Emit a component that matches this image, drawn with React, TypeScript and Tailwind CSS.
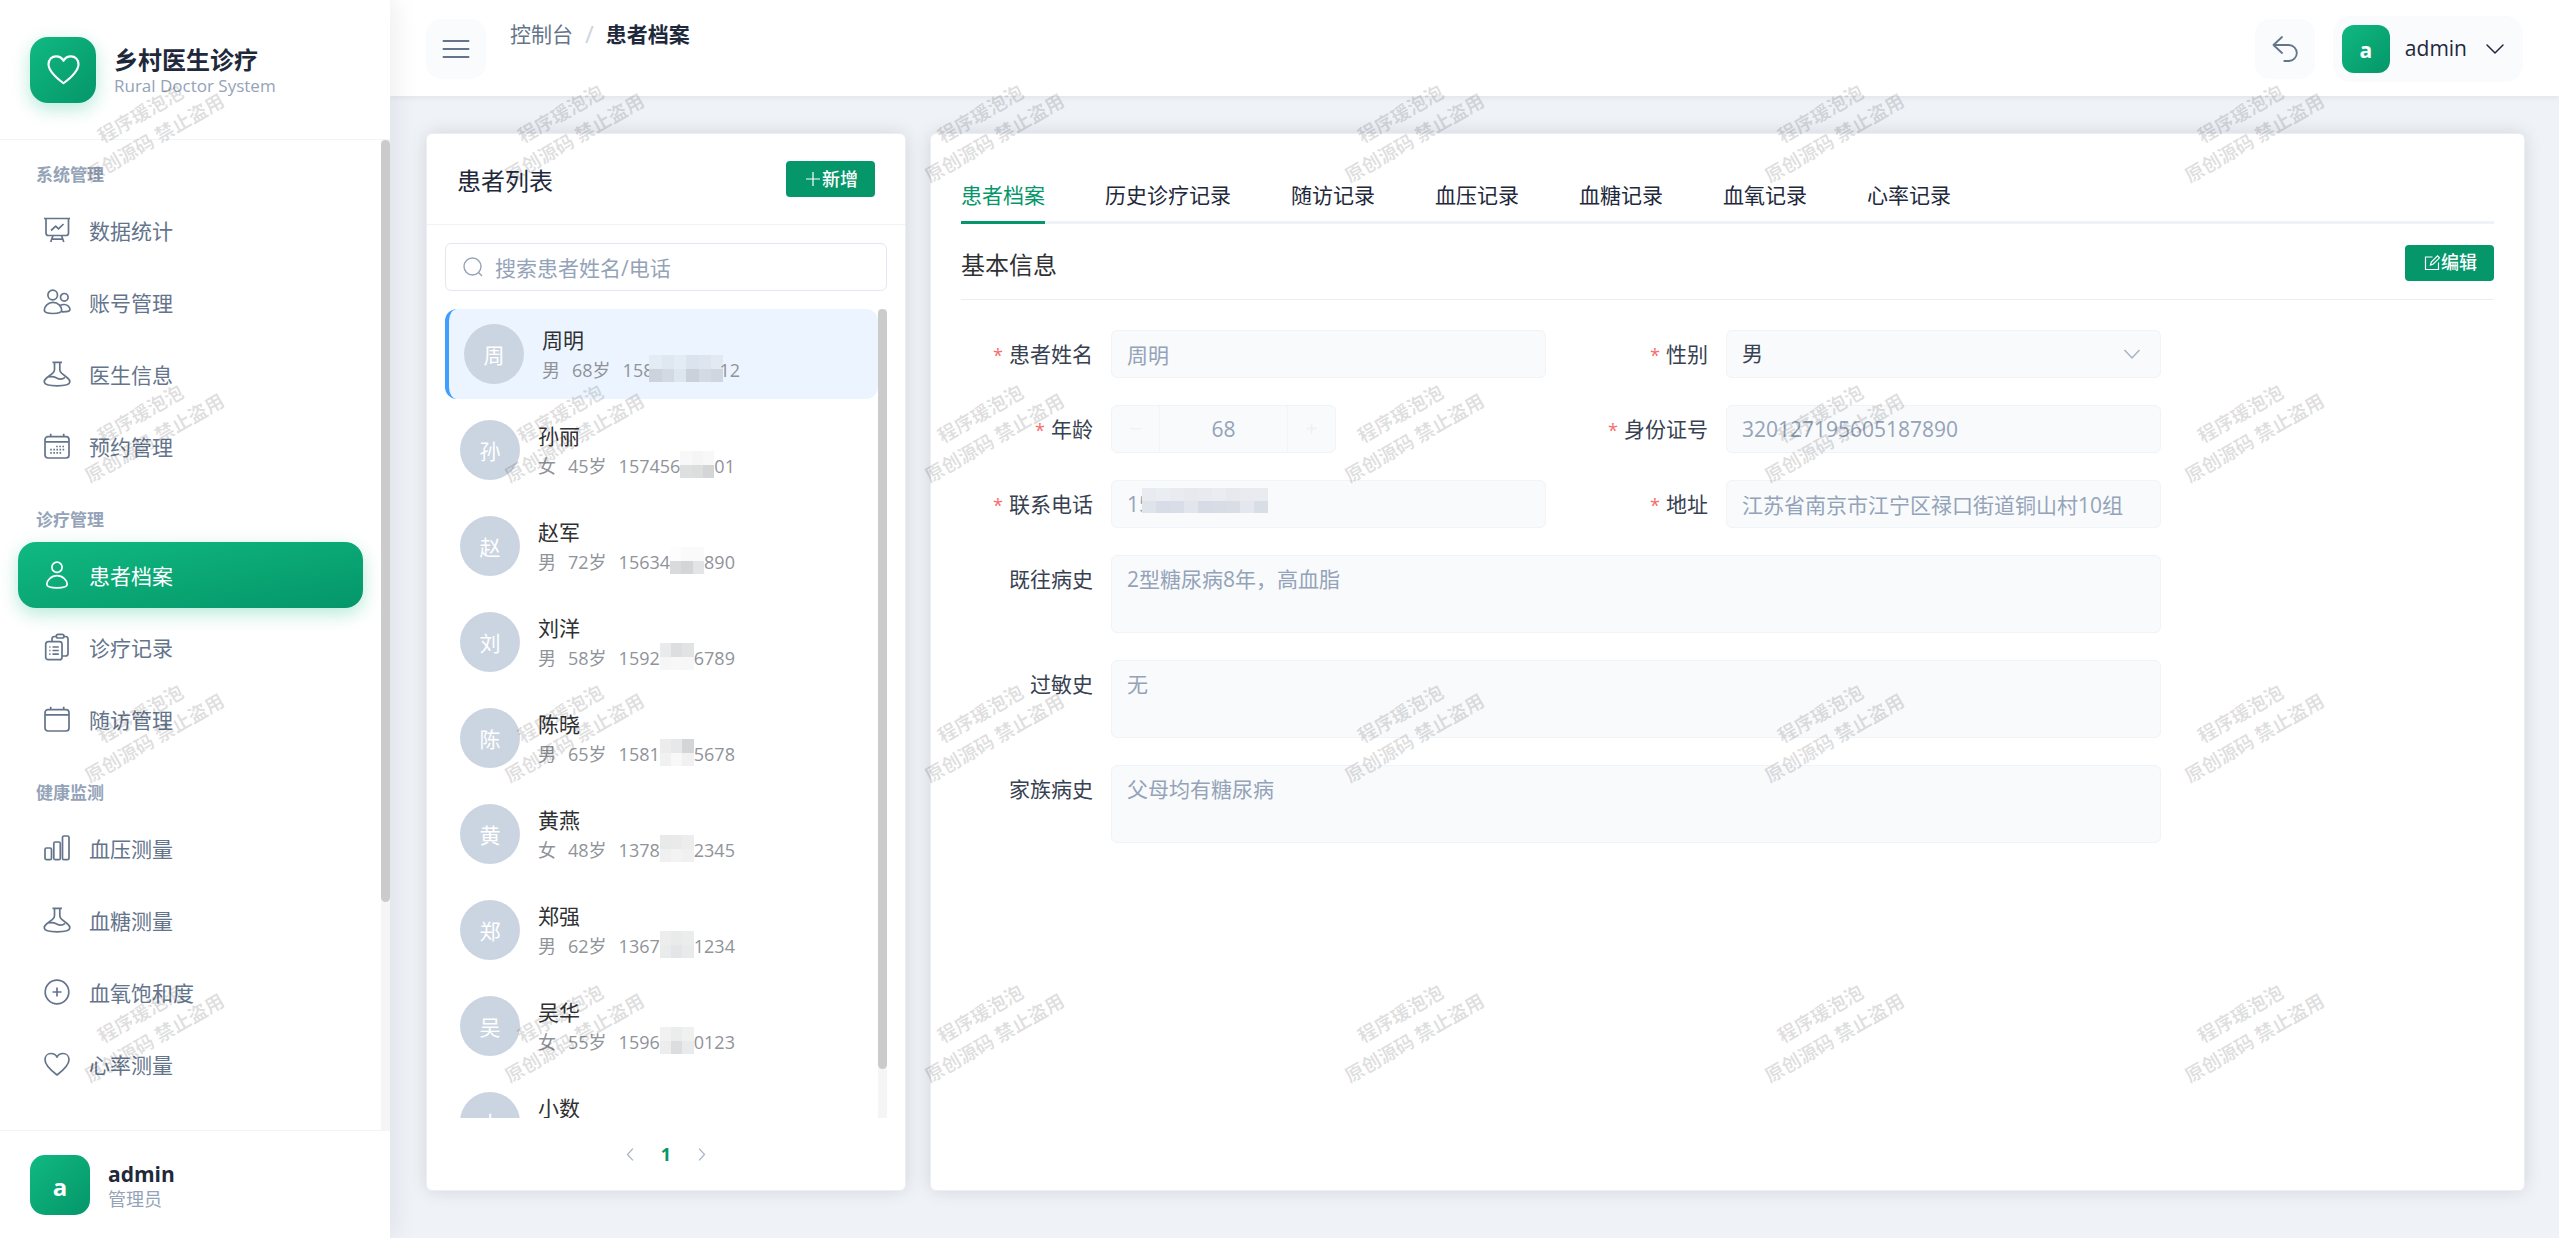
import { useState } from 'react';
import type { ReactNode } from 'react';
import clsx from 'clsx';

type IconName = 'board' | 'users' | 'flask' | 'schedule' | 'user' | 'records' | 'calendar' | 'bars' | 'plusCircle' | 'heart';

const iconShapes: Record<IconName, ReactNode> = {
  board: (
    <>
      <path d="M1 2.5h26M3 2.5V17a2.5 2.5 0 0 0 2.5 2.5H23a2.5 2.5 0 0 0 2.5-2.5V2.5" />
      <path d="M10 19.5 7.7 26M18.5 19.5 20.8 26M9 23.2h10.5M8 14.5l4.7-4.3 2.8 2.6L20.5 8" />
    </>
  ),
  users: (
    <>
      <circle cx="9.7" cy="7" r="4.8" />
      <circle cx="21.3" cy="9.3" r="3.8" />
      <path d="M10 14.3c-5 0-8.7 4.2-8.7 8 0 2.5 3.5 3.2 8.7 3.2s8.7-.7 8.7-3.2c0-3.8-3.7-8-8.7-8z" />
      <path d="M16.8 17.7c1.3-.8 2.8-1.2 4.2-1.2 3.5 0 6 2.8 6 5 0 1.8-2.5 2.4-8.3 2.3" />
    </>
  ),
  flask: (
    <>
      <path d="M9.5 2.3H19M11.5 2.3v7.5c0 1.5-.8 2.6-2 3.6l-6 4.6c-1.6 1.3-2.4 2.6-2.2 4.2.3 2.6 4.2 3.6 12.8 3.6s12.4-1 12.7-3.6c.2-1.6-.6-2.9-2.2-4.2l-5.8-4.6c-1.2-1-2-2.1-2-3.6V2.3" />
      <path d="M5.5 17c3.2-.8 5.5-.4 8.2 1s5.8 1.5 8.3-.7" />
    </>
  ),
  schedule: (
    <>
      <rect x="2" y="4.7" width="24" height="21.3" rx="3" />
      <path d="M2 9.8h24M7.7 1.8v3M20.7 1.8v3" />
      <path d="M13.2 14.5h8.5M7.2 17.7h14.5M7.2 20.9h12" strokeDasharray="1.6 1.5" />
    </>
  ),
  user: (
    <>
      <circle cx="14" cy="6.3" r="5.1" />
      <path d="M14 14.7c-6 0-10.2 5-10.2 8.6 0 2.9 4.2 3.6 10.2 3.6s10.2-.7 10.2-3.6c0-3.6-4.2-8.6-10.2-8.6z" />
    </>
  ),
  records: (
    <>
      <rect x="2.7" y="8.7" width="16.3" height="18" rx="2.5" />
      <path d="M9 8.7V6a2.5 2.5 0 0 1 2.5-2.5h1.8M21 3.5h1.5A2.5 2.5 0 0 1 25 6v14.5a2.5 2.5 0 0 1-2.5 2.5H19" />
      <path d="M13.3 3.2c0-1.2.8-1.9 1.9-1.9H19c1.2 0 2 .8 2 1.9S20.2 5 19 5h-3.8c-1.1 0-1.9-.7-1.9-1.8z" />
      <path d="M6.3 14h1.2M9.5 14h6.3M6.3 17.5h1.2M9.5 17.5h6.3M6.3 21.2h1.2M9.5 21.2h6.3" />
    </>
  ),
  calendar: (
    <>
      <rect x="2" y="4.7" width="24" height="21.3" rx="3" />
      <path d="M2 9.8h24M7.7 1.8v3M20.7 1.8v3" />
    </>
  ),
  bars: (
    <>
      <rect x="2" y="14" width="6.5" height="11.7" rx="1.5" />
      <rect x="10.8" y="8" width="6.5" height="17.7" rx="1.5" />
      <rect x="19.5" y="2" width="6.5" height="23.7" rx="1.5" />
    </>
  ),
  plusCircle: (
    <>
      <circle cx="14" cy="14" r="11.8" />
      <path d="M14 9.5v9M9.5 14h9" />
    </>
  ),
  heart: (
    <path d="M14 25C10 22 2 16 2 9.8 2 6 4.7 3.5 8 3.5c2.7 0 5 1.5 6 3.6 1-2.1 3.3-3.6 6-3.6 3.3 0 6 2.5 6 6.3C26 16 18 22 14 25z" />
  ),
};

function Icon({ name, className }: { name: IconName; className?: string }) {
  return (
    <svg
      viewBox="0 0 28 28"
      fill="none"
      stroke="currentColor"
      strokeWidth={1.7}
      strokeLinejoin="round"
      className={clsx('shrink-0', className)}
      aria-hidden="true"
    >
      {iconShapes[name]}
    </svg>
  );
}

interface MenuGroup {
  title: string;
  items: { label: string; icon: IconName }[];
}

const menu: MenuGroup[] = [
  {
    title: '系统管理',
    items: [
      { label: '数据统计', icon: 'board' },
      { label: '账号管理', icon: 'users' },
      { label: '医生信息', icon: 'flask' },
      { label: '预约管理', icon: 'schedule' },
    ],
  },
  {
    title: '诊疗管理',
    items: [
      { label: '患者档案', icon: 'user' },
      { label: '诊疗记录', icon: 'records' },
      { label: '随访管理', icon: 'calendar' },
    ],
  },
  {
    title: '健康监测',
    items: [
      { label: '血压测量', icon: 'bars' },
      { label: '血糖测量', icon: 'flask' },
      { label: '血氧饱和度', icon: 'plusCircle' },
      { label: '心率测量', icon: 'heart' },
    ],
  },
];

interface Patient {
  name: string;
  sex: string;
  age: number;
  head: string;
  tail: string;
  // hidden digits, two rows of blocks
  mask: string[][];
}

const patients: Patient[] = [
  {
    name: '周明', sex: '男', age: 68, head: '158', tail: '12',
    mask: [
      ['bg-[#e3ebf5]', 'bg-[#dfe7f1]', 'bg-[#e3ebf4]', 'bg-[#dbe3ee]', 'bg-[#dde5ef]', 'bg-[#e2e9f3]'],
      ['bg-[#ccd3dd]', 'bg-[#d2d9e3]', 'bg-[#dde5ef]', 'bg-[#cad1db]', 'bg-[#d3dae4]', 'bg-[#cfd6e0]'],
    ],
  },
  {
    name: '孙丽', sex: '女', age: 45, head: '157456', tail: '01',
    mask: [['bg-[#f8f8f8]', 'bg-[#f5f5f5]', 'bg-[#f8f8f8]'], ['bg-[#dedfe0]', 'bg-[#dcdddd]', 'bg-[#d4d5d6]']],
  },
  {
    name: '赵军', sex: '男', age: 72, head: '15634', tail: '890',
    mask: [['bg-[#fdfdfd]', 'bg-[#fafafa]', 'bg-[#fafafa]'], ['bg-[#d9dadb]', 'bg-[#d4d5d7]', 'bg-[#e3e4e5]']],
  },
  {
    name: '刘洋', sex: '男', age: 58, head: '1592', tail: '6789',
    mask: [['bg-[#e9eaea]', 'bg-[#dddedf]', 'bg-[#e2e3e3]'], ['bg-[#f6f6f6]', 'bg-[#f8f8f8]', 'bg-[#f7f7f7]']],
  },
  {
    name: '陈晓', sex: '男', age: 65, head: '1581', tail: '5678',
    mask: [['bg-[#ececed]', 'bg-[#e7e8e9]', 'bg-[#d4d5d6]'], ['bg-[#f1f1f1]', 'bg-[#f8f8f8]', 'bg-[#f1f1f1]']],
  },
  {
    name: '黄燕', sex: '女', age: 48, head: '1378', tail: '2345',
    mask: [['bg-[#e8e9e9]', 'bg-[#eaeaeb]', 'bg-[#ededee]'], ['bg-[#f0f0f0]', 'bg-[#f3f3f3]', 'bg-[#f0f0f0]']],
  },
  {
    name: '郑强', sex: '男', age: 62, head: '1367', tail: '1234',
    mask: [['bg-[#ededee]', 'bg-[#e9eaea]', 'bg-[#ebecec]'], ['bg-[#eaebeb]', 'bg-[#e4e5e6]', 'bg-[#e9eaea]']],
  },
  {
    name: '吴华', sex: '女', age: 55, head: '1596', tail: '0123',
    mask: [['bg-[#f1f1f1]', 'bg-[#ebecec]', 'bg-[#f0f0f0]'], ['bg-[#ededee]', 'bg-[#dcddde]', 'bg-[#e9eaea]']],
  },
  {
    name: '小数', sex: '男', age: 40, head: '1380', tail: '0001',
    mask: [['bg-[#ededee]', 'bg-[#e9eaea]', 'bg-[#ebecec]'], ['bg-[#eaebeb]', 'bg-[#e4e5e6]', 'bg-[#e9eaea]']],
  },
];

const tabs = ['患者档案', '历史诊疗记录', '随访记录', '血压记录', '血糖记录', '血氧记录', '心率记录'];

const phoneMask = [
  ['bg-[#e8ebf0]', 'bg-[#eaedf2]', 'bg-[#e9ebf0]', 'bg-[#e7e9ee]', 'bg-[#e8eaef]', 'bg-[#e9ecf0]', 'bg-[#e7e9ee]', 'bg-[#e9ebf0]', 'bg-[#e8ebef]'],
  ['bg-[#dfe3ea]', 'bg-[#d8dce6]', 'bg-[#d9dde7]', 'bg-[#e2e5ec]', 'bg-[#d7dbe5]', 'bg-[#d8dce5]', 'bg-[#d9dde6]', 'bg-[#e4e7ed]', 'bg-[#d9dde6]'],
];

function Mosaic({ rows, className }: { rows: string[][]; className?: string }) {
  return (
    <span className={clsx('flex flex-col overflow-hidden', className)} aria-hidden="true">
      {rows.map((row, i) => (
        <span key={i} className="flex flex-1">
          {row.map((color, j) => (
            <span key={j} className={clsx('flex-1', color)} />
          ))}
        </span>
      ))}
    </span>
  );
}

function Scrollbar({ thumb }: { thumb: string }) {
  return (
    <div className="w-[9px] shrink-0 bg-[#f5f5f5]">
      <div className={clsx('w-full rounded-full bg-[#cbcbcb]', thumb)} />
    </div>
  );
}

function Sidebar() {
  const [active, setActive] = useState('患者档案');

  return (
    <aside className="z-10 flex w-[390px] shrink-0 flex-col bg-white shadow-[4px_0_24px_rgba(15,23,42,0.08)]">
      <div className="flex h-[140px] shrink-0 items-center gap-[18px] border-b border-[#f1f5f9] px-[30px]">
        <div className="flex size-[66px] items-center justify-center rounded-[18px] bg-gradient-to-br from-[#10b981] to-[#059669] text-white shadow-[0_6px_18px_rgba(16,185,129,0.3)]">
          <Icon name="heart" className="size-[35px]" />
        </div>
        <div className="pt-1">
          <h1 className="text-[24px] leading-[28px] font-bold text-[#1e293b]">乡村医生诊疗</h1>
          <p className="text-[17px] leading-[24px] text-[#94a3b8]">Rural Doctor System</p>
        </div>
      </div>

      <div className="flex min-h-0 flex-1">
        <nav className="flex flex-1 flex-col gap-7 overflow-hidden px-[18px] py-[22px]">
          {menu.map((group) => (
            <div key={group.title}>
              <h2 className="mb-[9px] pl-[18px] text-[17px] leading-[26px] font-bold text-[#94a3b8]">{group.title}</h2>
              <ul className="space-y-1.5">
                {group.items.map(({ label, icon }) => (
                  <li key={label}>
                    <a
                      href="#"
                      onClick={() => setActive(label)}
                      className={clsx(
                        'flex h-[66px] items-center gap-[18px] rounded-[18px] px-[25px] text-[21px]',
                        active === label
                          ? 'bg-gradient-to-br from-[#10b981] to-[#059669] text-white shadow-[0_6px_18px_rgba(16,185,129,0.3)]'
                          : 'text-[#64748b]',
                      )}
                    >
                      <Icon name={icon} className="size-7" />
                      <span className="pt-1">{label}</span>
                    </a>
                  </li>
                ))}
              </ul>
            </div>
          ))}
        </nav>
        <Scrollbar thumb="h-[77%]" />
      </div>

      <div className="flex h-[108px] shrink-0 items-center gap-[18px] border-t border-[#f1f5f9] px-[30px]">
        <div className="flex size-[60px] items-center justify-center rounded-[15px] bg-gradient-to-br from-[#10b981] to-[#059669] pt-1 text-[24px] font-bold text-white">
          a
        </div>
        <div className="pt-0.5">
          <p className="text-[21px] leading-[26px] font-bold text-[#1e293b]">admin</p>
          <p className="text-[18px] leading-[24px] text-[#94a3b8]">管理员</p>
        </div>
      </div>
    </aside>
  );
}

function Header() {
  return (
    <header className="flex h-24 shrink-0 items-center justify-between bg-white px-9 pt-0.5 shadow-[0_1px_6px_rgba(15,23,42,0.08)]">
      <div className="flex items-start gap-6">
        <button type="button" aria-label="折叠菜单" className="flex size-[60px] items-center justify-center rounded-[15px] bg-[#fafbfd] text-[#64748b]">
          <svg viewBox="0 0 28 20" className="h-5 w-7" stroke="currentColor" strokeWidth="2" strokeLinecap="round" aria-hidden="true">
            <path d="M1.5 2h25M1.5 10h25M1.5 18h25" />
          </svg>
        </button>
        <nav className="flex gap-3 text-[21px] leading-[30px]" aria-label="面包屑">
          <a href="#" className="text-[#64748b]">控制台</a>
          <span className="text-[24px] text-[#cbd5e1]">/</span>
          <span className="font-bold text-[#1e293b]">患者档案</span>
        </nav>
      </div>
      <div className="flex items-center gap-[18px]">
        <button type="button" aria-label="返回" className="flex size-[60px] items-center justify-center rounded-[15px] bg-[#fafbfd] text-[#64748b]">
          <svg viewBox="0 0 28 28" className="size-7" fill="none" stroke="currentColor" strokeWidth="1.8" strokeLinecap="round" strokeLinejoin="round" aria-hidden="true">
            <path d="M11 2 2.5 10l8.5 8M2.5 10h15.3a8 8 0 0 1 0 16h-4.5" />
          </svg>
        </button>
        <button type="button" className="flex h-[66px] items-center gap-[18px] rounded-[18px] bg-[#fafbfd] pr-[18px] pl-[9px] text-[21px] text-[#1e293b]">
          <span className="flex items-center gap-[15px]">
            <span className="flex size-12 items-center justify-center rounded-xl bg-gradient-to-br from-[#10b981] to-[#059669] pt-1 font-bold text-white">a</span>
            <span>admin</span>
          </span>
          <svg viewBox="0 0 20 20" className="size-5" fill="none" stroke="currentColor" strokeWidth="1.5" strokeLinecap="round" strokeLinejoin="round" aria-hidden="true">
            <path d="m2 6 8 8 8-8" />
          </svg>
        </button>
      </div>
    </header>
  );
}

function PatientList() {
  const [selected, setSelected] = useState('周明');

  return (
    <section className="flex w-[480px] shrink-0 flex-col rounded-md border border-[#ebeef5] bg-white shadow-[0_0_18px_rgba(0,0,0,0.12)]">
      <div className="flex h-[91px] shrink-0 items-center justify-between border-b border-[#eff3f8] px-[30px]">
        <h2 className="pt-1 text-[24px] text-[#1e293b]">患者列表</h2>
        <button type="button" className="flex h-9 items-center rounded-[4px] bg-[#059669] pr-[17px] pl-[18px] text-[18px] font-medium text-white">
          <svg viewBox="0 0 18 18" className="size-[18px]" stroke="currentColor" strokeWidth="1.2" aria-hidden="true">
            <path d="M9 2v14M2 9h14" />
          </svg>
          新增
        </button>
      </div>

      <div className="flex min-h-0 flex-1 flex-col gap-[18px] px-[18px] pt-[18px]">
        <label className="flex h-12 shrink-0 items-center gap-3 rounded-md border border-[#e2e8f0] px-[17px] text-[#94a3b8]">
          <svg viewBox="0 0 20 20" className="size-5" fill="none" stroke="currentColor" strokeWidth="1.4" aria-hidden="true">
            <circle cx="9.5" cy="9.5" r="8.5" />
            <path d="m15.5 15.5 3.5 3.5" />
          </svg>
          <input
            type="text"
            aria-label="搜索患者"
            placeholder="搜索患者姓名/电话"
            className="min-w-0 flex-1 bg-transparent pt-1 text-[21px] outline-none placeholder:text-[#94a3b8]"
          />
        </label>

        <div className="flex min-h-0 flex-1">
          <ul className="flex flex-1 flex-col gap-1.5 overflow-hidden">
            {patients.map((p) => {
              const active = p.name === selected;
              return (
                <li key={p.name} className="shrink-0">
                  <button
                    type="button"
                    onClick={() => setSelected(p.name)}
                    className={clsx(
                      'flex h-[90px] w-full items-center gap-[18px] rounded-xl px-[15px] text-left',
                      active && 'border-l-4 border-[#409eff] bg-[#ecf5ff]',
                    )}
                  >
                    <span className="flex size-[60px] shrink-0 items-center justify-center rounded-full bg-[#cbd5e1] pt-1 text-[21px] text-white">
                      {p.name[0]}
                    </span>
                    <span className="flex flex-col pt-0.5">
                      <span className="text-[21px] leading-[30px] text-[#303133]">{p.name}</span>
                      <span className="flex gap-3 text-[18px] leading-[30px] text-[#909399]">
                        <span>{p.sex}</span>
                        <span>{p.age}岁</span>
                        <span className="flex">
                          {p.head}
                          <Mosaic rows={p.mask} className={clsx('h-[27px]', active ? '-mx-1 w-[74px]' : 'w-[34px]')} />
                          {p.tail}
                        </span>
                      </span>
                    </span>
                  </button>
                </li>
              );
            })}
          </ul>
          <Scrollbar thumb="h-[94%]" />
        </div>
      </div>

      <div className="flex h-[72px] shrink-0 items-center justify-center gap-[21px] text-[#a8b4c6]">
        <button type="button" aria-label="上一页">
          <svg viewBox="0 0 12 18" className="h-[15px] w-3" fill="none" stroke="currentColor" strokeWidth="1.5" aria-hidden="true">
            <path d="M9.5 2 3 9l6.5 7" />
          </svg>
        </button>
        <button type="button" className="px-1 text-[18px] font-bold text-[#059669]">1</button>
        <button type="button" aria-label="下一页">
          <svg viewBox="0 0 12 18" className="h-[15px] w-3" fill="none" stroke="currentColor" strokeWidth="1.5" aria-hidden="true">
            <path d="M2.5 2 9 9l-6.5 7" />
          </svg>
        </button>
      </div>
    </section>
  );
}

interface FieldProps {
  id: string;
  label: string;
  required?: boolean;
  wide?: boolean;
  children: ReactNode;
}

function Field({ id, label, required, wide, children }: FieldProps) {
  return (
    <div className={clsx('flex', wide && 'col-span-2')}>
      <label htmlFor={id} className="h-12 w-[150px] shrink-0 pr-[18px] text-right text-[21px] leading-[48px] text-[#374151]">
        {required && <span className="mr-1.5 text-[18px] text-[#f56c6c]">*</span>}
        {label}
      </label>
      <div className="min-w-0 flex-1">{children}</div>
    </div>
  );
}

const boxStyle = 'rounded-md border border-[#eff4f9] bg-[#f8fafc] text-[21px] text-[#94a3b8]';
const inputStyle = clsx(boxStyle, 'h-12 w-full px-[15px]');
const areaStyle = clsx(boxStyle, 'block h-[78px] w-full resize-none px-[15px] py-[7px] leading-[32px]');

function BasicInfo() {
  return (
    <form className="grid max-w-[1200px] grid-cols-2 gap-x-[30px] gap-y-[27px]">
      <Field id="name" label="患者姓名" required>
        <input id="name" readOnly value="周明" className={inputStyle} />
      </Field>
      <Field id="sex" label="性别" required>
        <div className="relative">
          <select id="sex" defaultValue="男" className={clsx(inputStyle, 'appearance-none text-[#374151]')}>
            <option>男</option>
            <option>女</option>
          </select>
          <svg viewBox="0 0 18 18" className="pointer-events-none absolute top-[15px] right-5 size-[18px] text-[#a8b4c6]" fill="none" stroke="currentColor" strokeWidth="1.5" aria-hidden="true">
            <path d="m1.5 5 7.5 8 7.5-8" />
          </svg>
        </div>
      </Field>
      <Field id="age" label="年龄" required>
        <div className={clsx(boxStyle, 'flex h-12 w-[225px] overflow-hidden')}>
          <button type="button" aria-label="减少" className="w-12 border-r border-[#f1f5f9] text-[#eef2f6]">−</button>
          <input id="age" readOnly value="68" className="min-w-0 flex-1 pt-0.5 text-center" />
          <button type="button" aria-label="增加" className="w-12 border-l border-[#f1f5f9] text-[#eef2f6]">+</button>
        </div>
      </Field>
      <Field id="idcard" label="身份证号" required>
        <input id="idcard" readOnly value="320127195605187890" className={inputStyle} />
      </Field>
      <Field id="phone" label="联系电话" required>
        <div className="relative">
          <input id="phone" readOnly value="15" className={inputStyle} />
          <Mosaic rows={phoneMask} className="absolute top-2 left-[31px] h-[25px] w-[126px]" />
        </div>
      </Field>
      <Field id="address" label="地址" required>
        <input id="address" readOnly value="江苏省南京市江宁区禄口街道铜山村10组" className={inputStyle} />
      </Field>
      <Field id="history" label="既往病史" wide>
        <textarea id="history" readOnly value="2型糖尿病8年，高血脂" className={areaStyle} />
      </Field>
      <Field id="allergy" label="过敏史" wide>
        <textarea id="allergy" readOnly value="无" className={areaStyle} />
      </Field>
      <Field id="family" label="家族病史" wide>
        <textarea id="family" readOnly value="父母均有糖尿病" className={areaStyle} />
      </Field>
    </form>
  );
}

function PatientDetail() {
  const [tab, setTab] = useState(tabs[0]);

  return (
    <section className="min-w-0 flex-1 rounded-md border border-[#ebeef5] bg-white px-[30px] pt-[30px] shadow-[0_0_18px_rgba(0,0,0,0.12)]">
      <div role="tablist" className="flex h-[60px] gap-[60px] border-b-[3px] border-[#eff3f8]">
        {tabs.map((t) => (
          <button
            key={t}
            type="button"
            role="tab"
            aria-selected={t === tab}
            onClick={() => setTab(t)}
            className={clsx(
              '-mb-[3px] border-b-[3px] pt-1.5 text-[21px]',
              t === tab ? 'border-[#059669] text-[#059669]' : 'border-transparent text-[#1e293b]',
            )}
          >
            {t}
          </button>
        ))}
      </div>
      <div className="mb-[30px] flex h-[76px] items-center justify-between border-b border-[#ebeef1] pt-0.5">
        <h3 className="pt-1 text-[24px] text-[#303133]">基本信息</h3>
        <button type="button" className="flex h-9 items-center rounded-[4px] bg-[#059669] pr-[17px] pl-[18px] text-[18px] font-medium text-white">
          <svg viewBox="0 0 18 18" className="size-[18px]" fill="none" stroke="currentColor" strokeWidth="1.2" aria-hidden="true">
            <path d="M9.5 3h-7v12.5h13v-7" />
            <path d="m7.5 11 .8-3 6.2-6.200 2 2L10.300 10z" />
          </svg>
          编辑
        </button>
      </div>
      <BasicInfo />
    </section>
  );
}

function Watermark() {
  return (
    <div className="pointer-events-none absolute inset-0 z-20 grid auto-rows-[300px] grid-cols-[repeat(auto-fill,420px)] overflow-hidden" aria-hidden="true">
      {Array.from({ length: 24 }, (_, i) => (
        <div key={i} className="flex h-[252px] w-[294px] items-center justify-center">
          <div className="-rotate-30 text-center text-[19px] leading-[28px] font-bold whitespace-nowrap text-black/13">
            <p>程序瑗泡泡</p>
            <p>原创源码 禁止盗用</p>
          </div>
        </div>
      ))}
    </div>
  );
}

export default function App() {
  return (
    <div className="relative flex h-screen overflow-hidden bg-[#eff3f8] font-['Open_Sans','Noto_Sans_CJK_SC',sans-serif]">
      <Sidebar />
      <div className="flex min-w-0 flex-1 flex-col">
        <Header />
        <main className="flex min-h-0 flex-1 gap-6 pt-[37px] pr-[34px] pb-[47px] pl-9">
          <PatientList />
          <PatientDetail />
        </main>
      </div>
      <Watermark />
    </div>
  );
}
